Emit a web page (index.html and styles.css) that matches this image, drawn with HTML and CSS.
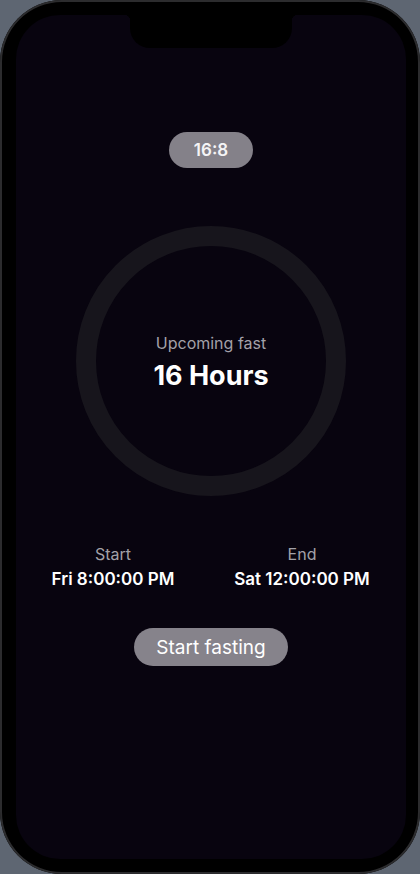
FILE: index.html
```html
<!DOCTYPE html>
<html lang="en">
<head>
<meta charset="utf-8">
<title>Fasting</title>
<link rel="stylesheet" href="styles.css">
</head>
<body>
<div class="phone">
  <div class="screen">
    <div class="notch"></div>
    <main class="content">
      <div class="plan-pill">16:8</div>
      <div class="ring">
        <div class="ring-label">Upcoming fast</div>
        <div class="ring-value">16 Hours</div>
      </div>
      <div class="times">
        <div class="time-col">
          <div class="time-label">Start</div>
          <div class="time-value">Fri 8:00:00 PM</div>
        </div>
        <div class="time-col">
          <div class="time-label">End</div>
          <div class="time-value">Sat 12:00:00 PM</div>
        </div>
      </div>
      <button class="start-btn">Start fasting</button>
    </main>
  </div>
</div>
</body>
</html>
```

FILE: styles.css
```css
* { box-sizing: border-box; }
html, body {
  margin: 0;
  padding: 0;
  background: #5e6672;
  font-family: Inter, "Noto Sans", "Liberation Sans", sans-serif;
}
.phone {
  width: 420px;
  height: 874px;
  background: #000;
  border-radius: 62px;
  padding: 15px 14px 15px 16px;
  box-shadow: inset 0 0 0 2px #2c2c2e;
}
.screen {
  position: relative;
  width: 390px;
  height: 844px;
  background: #08040f;
  border-radius: 44px;
  overflow: hidden;
}
.notch {
  position: absolute;
  top: 0;
  left: 114px;
  width: 162px;
  height: 33px;
  background: #000;
  border-radius: 0 0 20px 20px;
}
.notch::before, .notch::after {
  content: "";
  position: absolute;
  top: 0;
  width: 6px;
  height: 6px;
}
.notch::before { left: -6px; background: radial-gradient(circle at 0 100%, transparent 6px, #000 6.5px); }
.notch::after { right: -6px; background: radial-gradient(circle at 100% 100%, transparent 6px, #000 6.5px); }
.content {
  display: flex;
  flex-direction: column;
  align-items: center;
  padding-top: 117px;
}
.plan-pill {
  width: 84px;
  height: 36px;
  border-radius: 18px;
  background: #848189;
  color: #f4f4f6;
  font-size: 17px;
  font-weight: 600;
  display: flex;
  align-items: center;
  justify-content: center;
}
.ring {
  margin-top: 58px;
  width: 270px;
  height: 270px;
  border-radius: 50%;
  border: 20px solid #17151c;
  display: flex;
  flex-direction: column;
  align-items: center;
  justify-content: center;
  padding-top: 2px;
}
.ring-label {
  color: #a3a1a8;
  font-size: 16px;
  line-height: 20px;
}
.ring-value {
  color: #fff;
  font-size: 27px;
  font-weight: 700;
  line-height: 32px;
  margin-top: 7px;
}
.times {
  margin-top: 48px;
  width: 100%;
  display: grid;
  grid-template-columns: 194px 172px;
  column-gap: 6px;
}
.time-col {
  display: flex;
  flex-direction: column;
  align-items: center;
}
.time-label {
  color: #a3a1a8;
  font-size: 16px;
  line-height: 20px;
}
.time-value {
  color: #fff;
  font-size: 17px;
  font-weight: 600;
  line-height: 20px;
  margin-top: 5px;
  white-space: nowrap;
}
.start-btn {
  margin-top: 39px;
  width: 154px;
  height: 38px;
  border: none;
  border-radius: 19px;
  background: #86838b;
  color: #fff;
  font-family: inherit;
  font-size: 19px;
  font-weight: 400;
  padding: 0;
}
```
